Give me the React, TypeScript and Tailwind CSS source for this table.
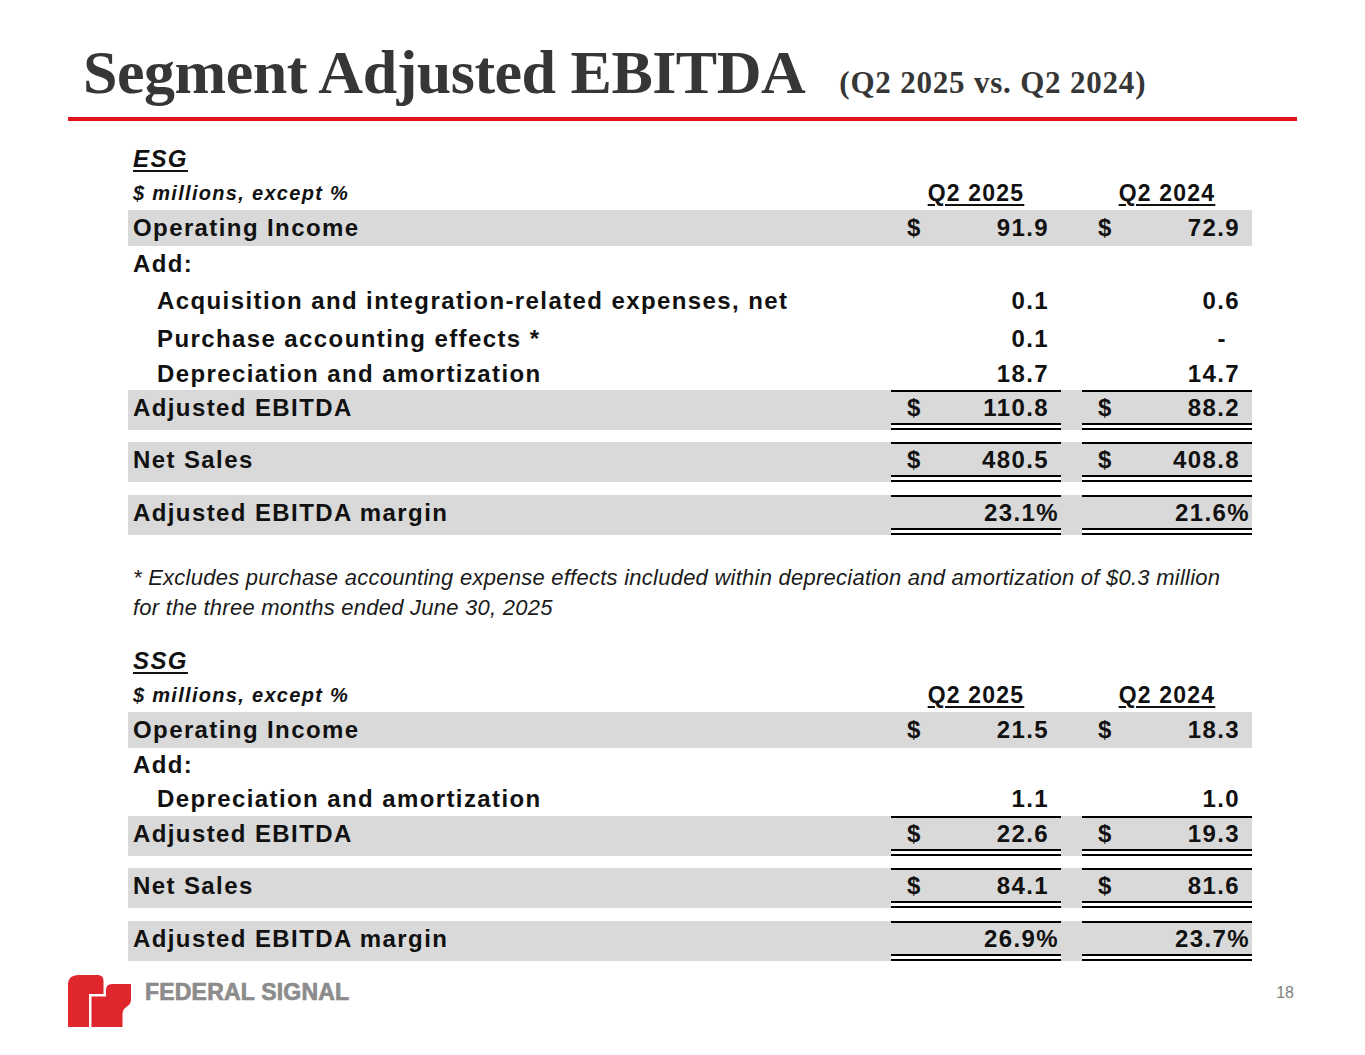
type Val = { v: string; d?: boolean; kind?: "num" | "pct" | "dash" };

type RowProps = {
  label: string;
  vals?: [Val, Val];
  h: number;
  gray?: boolean;
  indent?: boolean;
  top?: boolean;
  dbl?: boolean;
};

const arial = "font-['Liberation_Sans',Arial,sans-serif]";

function Cell({ val, top, dbl }: { val?: Val; top?: boolean; dbl?: boolean }) {
  const pr =
    val?.kind === "pct" ? "pr-[2px]" : val?.kind === "dash" ? "pr-[25px]" : "pr-[12px]";
  return (
    <div className="flex flex-col w-[170px] h-full">
      {top && <div className="h-[2px] shrink-0 bg-black" />}
      <div className="flex-1 flex items-center justify-between pl-[16px]">
        <span>{val?.d ? "$" : ""}</span>
        <span className={pr}>{val?.v}</span>
      </div>
      {dbl && (
        <div className="h-[7px] shrink-0 flex flex-col justify-between bg-white">
          <div className="h-[2px] bg-black" />
          <div className="h-[2px] bg-black" />
        </div>
      )}
    </div>
  );
}

function Row({ label, vals, h, gray, indent, top, dbl }: RowProps) {
  return (
    <div
      className={`flex text-[24px] leading-[28px] font-bold tracking-[1.4px] text-[#111] ${gray ? "bg-[#d9d9d9]" : ""}`}
      style={{ height: h }}
    >
      <div
        className={`flex-1 flex items-center ${indent ? "pl-[29px]" : "pl-[5px]"} ${top ? "pt-[2px]" : ""} ${dbl ? "pb-[7px]" : ""}`}
      >
        {label}
      </div>
      <Cell val={vals?.[0]} top={top} dbl={dbl} />
      <div className="w-[21px]" />
      <Cell val={vals?.[1]} top={top} dbl={dbl} />
    </div>
  );
}

function Header({ name }: { name: string }) {
  return (
    <>
      <div className="h-[35px] flex items-center pl-[5px] text-[24px] font-bold italic tracking-[1.4px] underline decoration-2 underline-offset-[3px] text-[#111]">
        {name}
      </div>
      <div className="h-[34px] flex items-center text-[#111]">
        <div className="flex-1 pl-[5px] text-[20px] font-bold italic tracking-[1.3px]">
          $ millions, except %
        </div>
        <div className="w-[170px] text-center text-[23px] font-bold tracking-[1.2px] underline decoration-2 underline-offset-[3px]">
          Q2 2025
        </div>
        <div className="w-[21px]" />
        <div className="w-[170px] text-center text-[23px] font-bold tracking-[1.2px] underline decoration-2 underline-offset-[3px]">
          Q2 2024
        </div>
      </div>
    </>
  );
}

function Totals({ ebitda, sales, margin }: { ebitda: [Val, Val]; sales: [Val, Val]; margin: [Val, Val] }) {
  return (
    <>
      <Row label="Adjusted EBITDA" vals={ebitda} h={40} gray top dbl />
      <div className="h-[12px]" />
      <Row label="Net Sales" vals={sales} h={40} gray top dbl />
      <div className="h-[13px]" />
      <Row label="Adjusted EBITDA margin" vals={margin} h={40} gray top dbl />
    </>
  );
}

// fs mark: the "f" on the left, the "s" tucked under its arm, split by thin white gaps
function Logo() {
  return (
    <svg width="64" height="56" viewBox="0 0 64 56">
      <path d="M0 54 V12 Q0 2 10 2 H30 Q35.5 2 35.5 8 V21 H21 V54 Z" fill="#e0272e" />
      <path
        d="M23.5 54 V23.5 H38 V17 Q38 11 44 11 H63 V27 C63 34 54.5 33 54.5 41 V54 Z"
        fill="#e0272e"
      />
    </svg>
  );
}

export default function App() {
  return (
    <div className={`w-[1365px] h-[1055px] bg-white overflow-hidden ${arial}`}>
      <div className="flex items-baseline pl-[83px] pt-[41px]">
        <h1 className="font-['Liberation_Serif',serif] font-bold text-[62px] leading-none tracking-[-0.5px] text-[#363636]">
          Segment Adjusted EBITDA
        </h1>
        <span className="ml-[34px] font-['Liberation_Serif',serif] font-bold text-[31px] leading-none tracking-[0.8px] text-[#363636]">
          (Q2 2025 vs. Q2 2024)
        </span>
      </div>
      <div className="mt-[14px] ml-[68px] w-[1229px] h-[4px] bg-[#e3141b]" />

      <div className="ml-[128px] w-[1124px] mt-[20px]">
        <Header name="ESG" />
        <Row label="Operating Income" h={36} gray vals={[{ v: "91.9", d: true }, { v: "72.9", d: true }]} />
        <Row label="Add:" h={36} />
        <Row
          label="Acquisition and integration-related expenses, net"
          h={38}
          indent
          vals={[{ v: "0.1" }, { v: "0.6" }]}
        />
        <Row label="Purchase accounting effects *" h={37} indent vals={[{ v: "0.1" }, { v: "-", kind: "dash" }]} />
        <Row label="Depreciation and amortization" h={33} indent vals={[{ v: "18.7" }, { v: "14.7" }]} />
        <Totals
          ebitda={[{ v: "110.8", d: true }, { v: "88.2", d: true }]}
          sales={[{ v: "480.5", d: true }, { v: "408.8", d: true }]}
          margin={[{ v: "23.1%", kind: "pct" }, { v: "21.6%", kind: "pct" }]}
        />

        <div className="mt-[28px] pl-[5px] text-[22px] italic leading-[30px] tracking-[0.25px] text-[#1a1a1a]">
          <p>
            * Excludes purchase accounting expense effects included within depreciation and amortization of $0.3 million
          </p>
          <p>for the three months ended June 30, 2025</p>
        </div>

        <div className="mt-[20px]">
          <Header name="SSG" />
          <Row label="Operating Income" h={36} gray vals={[{ v: "21.5", d: true }, { v: "18.3", d: true }]} />
          <Row label="Add:" h={34} />
          <Row label="Depreciation and amortization" h={34} indent vals={[{ v: "1.1" }, { v: "1.0" }]} />
          <Totals
            ebitda={[{ v: "22.6", d: true }, { v: "19.3", d: true }]}
            sales={[{ v: "84.1", d: true }, { v: "81.6", d: true }]}
            margin={[{ v: "26.9%", kind: "pct" }, { v: "23.7%", kind: "pct" }]}
          />
        </div>
      </div>

      <div className="mt-[12px] flex items-start">
        <div className="ml-[68px] flex items-start">
          <Logo />
          <span className="ml-[13px] mt-[8px] text-[23px] font-bold leading-none tracking-[0.2px] text-[#8c8c8c] [-webkit-text-stroke:0.7px_#8c8c8c]">
            FEDERAL SIGNAL
          </span>
        </div>
        <span className="ml-auto mr-[71px] mt-[12px] text-[16px] leading-none text-[#7f7f7f]">18</span>
      </div>
    </div>
  );
}
